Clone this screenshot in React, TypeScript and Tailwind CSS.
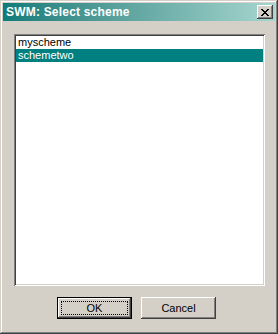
import React from "react";

const raised =
  "shadow-[inset_-1px_-1px_#404040,inset_1px_1px_#ffffff,inset_-2px_-2px_#808080,inset_2px_2px_#d4d0c8]";
const windowBevel =
  "shadow-[inset_-1px_-1px_#404040,inset_1px_1px_#d4d0c8,inset_-2px_-2px_#808080,inset_2px_2px_#ffffff]";
const sunken =
  "shadow-[inset_1px_1px_#808080,inset_-1px_-1px_#ffffff,inset_2px_2px_#404040,inset_-2px_-2px_#d4d0c8]";

const xRows = ["11000011", "01100110", "00111100", "00011000", "00111100", "01100110", "11000011"];

function CloseGlyph() {
  return (
    <svg width="8" height="7" viewBox="0 0 8 7" shapeRendering="crispEdges">
      {xRows.map((row, y) =>
        row.split("").map((c, x) => (c === "1" ? <rect key={`${x}-${y}`} x={x} y={y} width="1" height="1" fill="#000" /> : null))
      )}
    </svg>
  );
}

const items = ["myscheme", "schemetwo"];

export default function App() {
  const font = { fontFamily: '"Liberation Sans", Arial, sans-serif' };
  return (
    <div className={`w-[278px] h-[334px] bg-[#d4d0c8] p-[3px] flex flex-col ${windowBevel}`} style={font}>
      <div className="h-[18px] flex items-center justify-between pl-[3px] pr-[2px] bg-gradient-to-r from-[#0a7c7a] to-[#a6d6cf]">
        <span className="text-white font-bold text-[12px] leading-none tracking-[0.2px]">SWM: Select scheme</span>
        <div className={`w-[16px] h-[14px] bg-[#d4d0c8] flex items-center justify-center ${raised}`}>
          <CloseGlyph />
        </div>
      </div>

      <div className={`mt-[13px] ml-[11px] mr-[10px] h-[252px] bg-white p-[2px] ${sunken}`}>
        {items.map((name, i) => (
          <div
            key={name}
            className={`h-[13px] pl-[2px] text-[11px] leading-[13px] ${i === 1 ? "bg-[#008080] text-white" : "text-black"}`}
          >
            {name}
          </div>
        ))}
      </div>

      <div className="mt-[11px] pl-[54px] flex gap-[9px]">
        <div className="w-[75px] h-[22px] border border-black bg-[#d4d0c8]">
          <div className={`w-full h-full p-[3px] ${raised}`}>
            <div className="w-full h-full border border-dotted border-black flex items-center justify-center text-[11px] text-black">
              OK
            </div>
          </div>
        </div>
        <div className={`w-[75px] h-[22px] bg-[#d4d0c8] flex items-center justify-center text-[11px] text-black ${raised}`}>
          Cancel
        </div>
      </div>
    </div>
  );
}
